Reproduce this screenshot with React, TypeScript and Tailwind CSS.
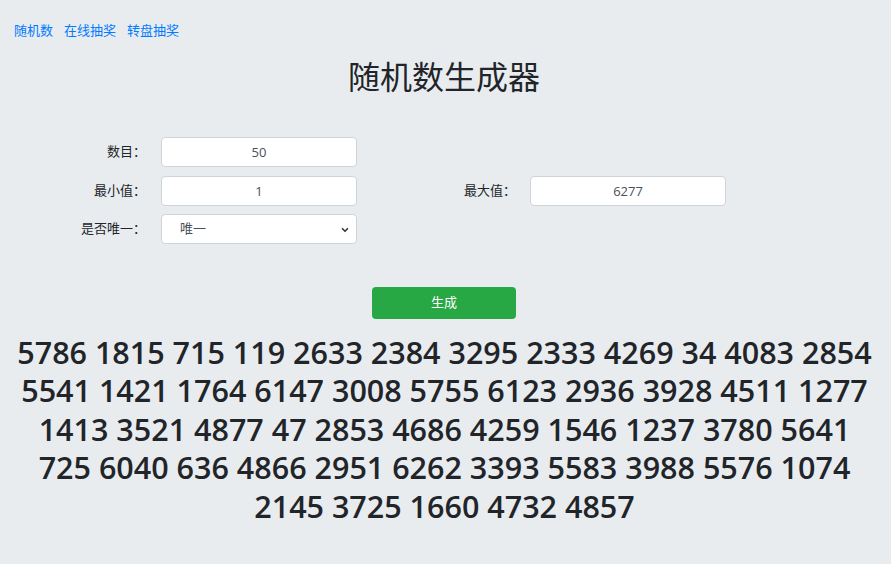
import { ChevronDown } from "lucide-react";

const LINES = [
  "5786 1815 715 119 2633 2384 3295 2333 4269 34 4083 2854",
  "5541 1421 1764 6147 3008 5755 6123 2936 3928 4511 1277",
  "1413 3521 4877 47 2853 4686 4259 1546 1237 3780 5641",
  "725 6040 636 4866 2951 6262 3393 5583 3988 5576 1074",
  "2145 3725 1660 4732 4857",
];

const font = { fontFamily: '"Segoe UI", "Open Sans", "Noto Sans CJK SC", sans-serif' };

function Field({ value, gap }: { value: string; gap: string }) {
  return (
    <input
      readOnly
      value={value}
      className={`${gap} h-[30px] w-[196px] rounded-[4px] border border-[#ced4da] bg-white text-center text-[13px] text-[#495057] outline-none`}
    />
  );
}

function Label({ text, w }: { text: string; w: string }) {
  return <div className={`${w} text-right text-[13px] text-[#212529]`}>{text}</div>;
}

export default function App() {
  return (
    <div className="min-h-[564px] w-full bg-[#e9ecef] pt-[20px] text-[#212529]" style={font}>
      <div className="flex gap-[11px] px-[14px] text-[13px] leading-[20px] text-[#007bff]">
        <a href="#">随机数</a>
        <a href="#">在线抽奖</a>
        <a href="#">转盘抽奖</a>
      </div>

      <h1 className="mt-[18px] pr-[3px] text-center text-[32px] font-normal leading-[38px]">随机数生成器</h1>

      <div className="mt-[41px] flex flex-col gap-[8.5px]">
        <div className="flex items-center">
          <Label w="w-[146px]" text="数目：" />
          <Field gap="ml-[15px]" value="50" />
        </div>
        <div className="flex items-center">
          <Label w="w-[146px]" text="最小值：" />
          <Field gap="ml-[15px]" value="1" />
          <Label w="w-[159px]" text="最大值：" />
          <Field gap="ml-[14px]" value="6277" />
        </div>
        <div className="flex items-center">
          <Label w="w-[146px]" text="是否唯一：" />
          <div className="relative ml-[15px] flex h-[30px] w-[196px] items-center rounded-[4px] border border-[#ced4da] bg-white pl-[18px] text-[13px] text-[#495057]">
            唯一
            <ChevronDown className="absolute right-[6px] top-[10px] h-[10px] w-[10px] text-[#343a40]" strokeWidth={4} />
          </div>
        </div>
      </div>

      <div className="mt-[43px] flex justify-center pr-[3px]">
        <button className="h-[32px] w-[144px] rounded-[4px] bg-[#28a745] text-[13px] text-white">生成</button>
      </div>

      <div className="mt-[14px] pr-[2px] text-center text-[30.5px] font-semibold leading-[38.4px] text-[#212529]">
        {LINES.map((l) => (
          <div key={l}>{l}</div>
        ))}
      </div>
    </div>
  );
}
